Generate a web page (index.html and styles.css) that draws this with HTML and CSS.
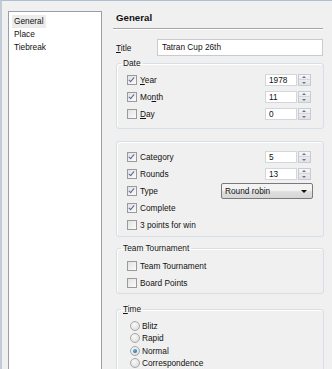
FILE: index.html
```html
<!DOCTYPE html>
<html>
<head>
    <meta charset="utf-8" />
    <title>Tournament - General</title>
    <link rel="stylesheet" href="styles.css">
</head>
<body>
    <div class="window">
        <ul class="pages">
            <li class="sel">General</li>
            <li>Place</li>
            <li>Tiebreak</li>
        </ul>

        <div class="panel">
            <h1 class="head">General</h1>

            <div class="title-row">
                <span class="caption"><u>T</u>itle</span>
                <div class="edit">Tatran Cup 26th</div>
            </div>

            <fieldset class="group date">
                <legend>Date</legend>
                <div class="row">
                    <span class="check on"></span><span class="lbl"><u>Y</u>ear</span>
                    <span class="spin"><span class="val">1978</span><span class="btns"><i class="up"></i><i class="down"></i></span></span>
                </div>
                <div class="row">
                    <span class="check on"></span><span class="lbl">Mo<u>n</u>th</span>
                    <span class="spin"><span class="val">11</span><span class="btns"><i class="up"></i><i class="down"></i></span></span>
                </div>
                <div class="row">
                    <span class="check"></span><span class="lbl"><u>D</u>ay</span>
                    <span class="spin"><span class="val">0</span><span class="btns"><i class="up"></i><i class="down"></i></span></span>
                </div>
            </fieldset>

            <div class="group plain">
                <div class="row">
                    <span class="check on"></span><span class="lbl">Category</span>
                    <span class="spin"><span class="val">5</span><span class="btns"><i class="up"></i><i class="down"></i></span></span>
                </div>
                <div class="row">
                    <span class="check on"></span><span class="lbl">Rounds</span>
                    <span class="spin"><span class="val">13</span><span class="btns"><i class="up"></i><i class="down"></i></span></span>
                </div>
                <div class="row">
                    <span class="check on"></span><span class="lbl">Type</span>
                    <span class="combo">Round robin<i class="arrow"></i></span>
                </div>
                <div class="row">
                    <span class="check on"></span><span class="lbl">Complete</span>
                </div>
                <div class="row">
                    <span class="check"></span><span class="lbl">3 points for win</span>
                </div>
            </div>

            <fieldset class="group team">
                <legend>Team Tournament</legend>
                <div class="row">
                    <span class="check"></span><span class="lbl">Team Tournament</span>
                </div>
                <div class="row">
                    <span class="check"></span><span class="lbl">Board Points</span>
                </div>
            </fieldset>

            <fieldset class="group time">
                <legend><u>T</u>ime</legend>
                <div class="row radio-row"><span class="radio"></span><span class="lbl">Blitz</span></div>
                <div class="row radio-row"><span class="radio"></span><span class="lbl">Rapid</span></div>
                <div class="row radio-row"><span class="radio on"></span><span class="lbl">Normal</span></div>
                <div class="row radio-row"><span class="radio"></span><span class="lbl">Correspondence</span></div>
            </fieldset>
        </div>
    </div>
</body>
</html>
```

FILE: styles.css
```css
body {
    margin: 0;
    padding: 0;
    background: #f0f0f0;
    font-family: "Liberation Sans", Arial, sans-serif;
    font-size: 8.3px;
    color: #111;
    overflow: hidden;
}

u {
    text-decoration: underline;
    text-underline-offset: 1px;
}

.window {
    display: flex;
    height: 368px;
    border-top: 1px solid #aebfd4;
    border-left: 2px solid #c3ccd6;
}

/* page list on the left */
.pages {
    list-style: none;
    margin: 10px 0 0 6px;
    padding: 3px 3px;
    width: 86px;
    background: #fff;
    border: 1px solid #9a9ea6;
    border-bottom: none;
}
.pages li {
    height: 13px;
    line-height: 13px;
    padding: 0 2px;
}
.pages li.sel {
    display: inline-block;
    background: #ececec;
}

/* right side */
.panel {
    margin-left: 11px;
    width: 210px;
}

.head {
    margin: 10px 0 0 0;
    padding: 0 0 4px 3px;
    font-size: 9.7px;
    line-height: 13px;
    font-weight: bold;
    border-bottom: 1px solid #a6a6a6;
    box-shadow: 0 1px 0 #fff;
}

.title-row {
    display: flex;
    align-items: center;
    margin: 10px 0 0 3px;
    height: 17px;
}
.title-row .caption {
    width: 41px;
}
.edit {
    flex: 1;
    height: 15px;
    line-height: 15px;
    padding-left: 4px;
    background: #fff;
    border: 1px solid #c7cacf;
}

.group {
    margin: 0 0 0 3px;
    width: 208px;
    box-sizing: border-box;
    border: 1px solid #d5dfe5;
    border-radius: 3px;
    box-shadow: inset 1px 1px 0 #fff;
    padding: 0 0 0 10px;
}
.group legend {
    padding: 0 2px;
    margin-left: -6px;
    line-height: 10px;
    color: #151515;
}

.date {
    margin-top: 2px;
    padding-top: 3px;
    padding-bottom: 6px;
}
.plain {
    margin-top: 12px;
    padding-top: 6px;
    padding-bottom: 3px;
}
.team {
    margin-top: 6px;
    padding-top: 4px;
    padding-bottom: 2px;
}
.time {
    margin-top: 10px;
    padding-top: 6px;
    padding-bottom: 4px;
}

.row {
    display: flex;
    align-items: center;
    height: 17px;
}
.radio-row {
    height: 12.3px;
}
.lbl {
    margin-left: 3px;
}

.check {
    width: 8px;
    height: 8px;
    border: 1px solid #9a9a9a;
    background: linear-gradient(135deg, #e2e2e2, #fbfbfb);
    position: relative;
}
.check.on::after {
    content: "";
    position: absolute;
    left: 2px;
    top: 0px;
    width: 2px;
    height: 5px;
    border-right: 1.5px solid #54679a;
    border-bottom: 1.5px solid #54679a;
    transform: rotate(40deg);
}

.radio {
    width: 8px;
    height: 8px;
    margin-left: 3px;
    border-radius: 50%;
    border: 1px solid #a8a8a8;
    background: radial-gradient(circle at 40% 35%, #fafafa, #d6d6d6);
    position: relative;
}
.radio.on::after {
    content: "";
    position: absolute;
    left: 2px;
    top: 2px;
    width: 4px;
    height: 4px;
    border-radius: 50%;
    background: radial-gradient(circle at 40% 35%, #5ab0e8, #1b5d96);
}
.radio-row .lbl {
    margin-left: 2px;
}

.spin {
    margin-left: auto;
    margin-right: 12px;
    display: flex;
    height: 12px;
}
.spin .val {
    width: 27px;
    height: 10px;
    line-height: 10px;
    padding-left: 3px;
    background: #fff;
    border: 1px solid #d3d6da;
}
.spin .btns {
    width: 11px;
    margin-left: 1px;
    display: flex;
    flex-direction: column;
    border: 1px solid #c8cbcf;
    background: linear-gradient(#f6f6f6, #e2e2e2);
}
.spin .btns i {
    flex: 1;
    position: relative;
}
.spin .btns i.up {
    border-bottom: 1px solid #d4d6d9;
}
.spin .btns i::after {
    content: "";
    position: absolute;
    left: 3px;
    border-left: 2.5px solid transparent;
    border-right: 2.5px solid transparent;
}
.spin .btns i.up::after {
    top: 1px;
    border-bottom: 2.5px solid #5e75a3;
}
.spin .btns i.down::after {
    top: 1.5px;
    border-top: 2.5px solid #5e75a3;
}

.combo {
    margin-left: auto;
    margin-right: 10px;
    width: 87px;
    height: 14px;
    line-height: 14px;
    padding-left: 3px;
    border: 1px solid #7a7a7a;
    border-radius: 2px;
    background: linear-gradient(#f3f3f3 45%, #dedede 55%, #d6d6d6);
    position: relative;
}
.combo .arrow {
    position: absolute;
    right: 5px;
    top: 6px;
    border-left: 3px solid transparent;
    border-right: 3px solid transparent;
    border-top: 3px solid #111;
}
```
